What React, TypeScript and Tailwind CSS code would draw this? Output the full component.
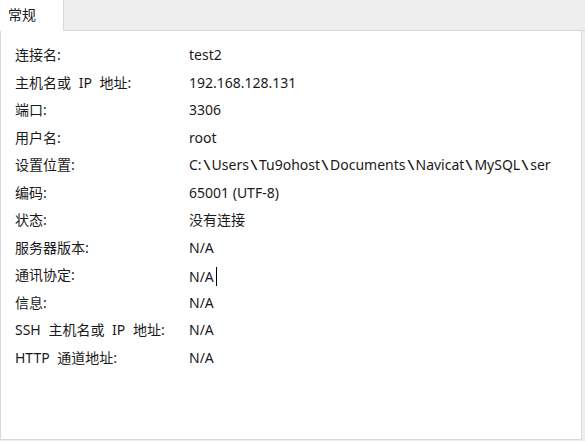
const rows: [string, string][] = [
  ["连接名:", "test2"],
  ["主机名或 IP 地址:", "192.168.128.131"],
  ["端口:", "3306"],
  ["用户名:", "root"],
  ["设置位置:", "C:\\Users\\Tu9ohost\\Documents\\Navicat\\MySQL\\ser"],
  ["编码:", "65001 (UTF-8)"],
  ["状态:", "没有连接"],
  ["服务器版本:", "N/A"],
  ["通讯协定:", "N/A"],
  ["信息:", "N/A"],
  ["SSH 主机名或 IP 地址:", "N/A"],
  ["HTTP 通道地址:", "N/A"],
];

// backslashes are wider in the original UI font
function Value({ text }: { text: string }) {
  const parts = text.split("\\");
  return (
    <>
      {parts.map((p, i) => (
        <span key={i}>
          {i > 0 && <span className="inline-block w-[10px] scale-x-[1.4] text-center">\</span>}
          {p}
        </span>
      ))}
    </>
  );
}

export default function App() {
  return (
    <div
      className="flex h-[441px] w-[585px] flex-col bg-[#eeeeee] text-[14px] text-[#1a1a1a]"
      style={{ fontFamily: '"Noto Sans", "Noto Sans CJK SC", sans-serif' }}
    >
      <div className="flex h-[31px] shrink-0">
        <div className="relative z-10 flex h-[31px] w-[64px] items-start border-r border-[#d9d9d9] bg-white pl-[8px] pt-[4px]">
          常规
        </div>
        <div className="mt-[30px] h-px flex-1 border-t border-[#d9d9d9]" />
      </div>
      <div className="mr-[3px] mb-[1px] flex-1 border-x border-b border-[#d9d9d9] bg-white pt-[10px]">
        {rows.map(([k, v], i) => (
          <div key={k} className="flex h-[27.5px] items-center">
            <span className="w-[188px] shrink-0 pl-[14px] [word-spacing:4px]">{k}</span>
            <span className="whitespace-nowrap">
              <Value text={v} />
              {i === 8 && <span className="ml-[2px] inline-block h-[19px] w-px translate-y-[4px] bg-black" />}
            </span>
          </div>
        ))}
      </div>
    </div>
  );
}
